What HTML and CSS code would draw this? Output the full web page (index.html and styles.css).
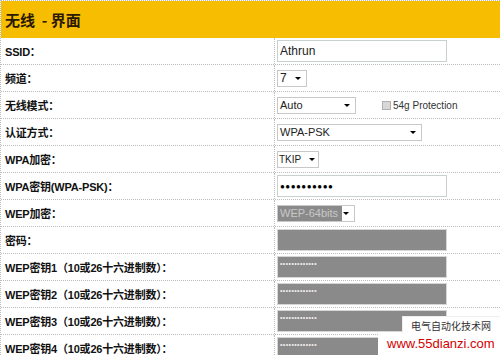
FILE: index.html
```html
<!DOCTYPE html>
<html>
<head>
<meta charset="utf-8">
<link rel="stylesheet" href="styles.css">
</head>
<body>
<div class="page">
  <div class="header">无线&nbsp; - 界面</div>
  <div class="row"><div class="label">SSID：</div><div class="field"><div class="input">Athrun</div></div></div>
  <div class="row"><div class="label">频道：</div><div class="field"><div class="select w-ch">7<span class="arrow"></span></div></div></div>
  <div class="row"><div class="label">无线模式：</div><div class="field"><div class="select w-mode">Auto<span class="arrow"></span></div><span class="check"></span><span class="chk-label">54g Protection</span></div></div>
  <div class="row"><div class="label">认证方式：</div><div class="field"><div class="select w-auth">WPA-PSK<span class="arrow"></span></div></div></div>
  <div class="row"><div class="label">WPA加密：</div><div class="field"><div class="select w-tkip">TKIP<span class="arrow"></span></div></div></div>
  <div class="row"><div class="label">WPA密钥(WPA-PSK)：</div><div class="field"><div class="input pwd">●●●●●●●●●●</div></div></div>
  <div class="row"><div class="label">WEP加密：</div><div class="field"><div class="select w-wep disabled"><span class="sel-text">WEP-64bits</span><span class="arrow"></span></div></div></div>
  <div class="row"><div class="label">密码：</div><div class="field"><div class="input gray"></div></div></div>
  <div class="row"><div class="label">WEP密钥1（10或26十六进制数）：</div><div class="field"><div class="input gray"><span class="dots">•••••••••••••</span></div></div></div>
  <div class="row"><div class="label">WEP密钥2（10或26十六进制数）：</div><div class="field"><div class="input gray"><span class="dots">•••••••••••••</span></div></div></div>
  <div class="row"><div class="label">WEP密钥3（10或26十六进制数）：</div><div class="field"><div class="input gray"><span class="dots">•••••••••••••</span></div></div></div>
  <div class="row"><div class="label">WEP密钥4（10或26十六进制数）：</div><div class="field"><div class="input gray"><span class="dots">•••••••••••••</span></div></div></div>
  <div class="wm-box">电气自动化技术网</div>
  <div class="wm-url">www.55dianzi.com</div>
</div>
</body>
</html>
```
FILE: styles.css
```css
html, body { margin: 0; padding: 0; background: #fff; }
body { width: 500px; height: 355px; overflow: hidden; }
.page {
  position: relative;
  width: 500px;
  height: 355px;
  border-top: 1px dotted #bbb;
  border-left: 1px dotted #bbb;
  box-sizing: border-box;
  font-family: "Liberation Sans", "Noto Sans CJK SC", sans-serif;
}
.header {
  height: 37px;
  background: #f7bd00;
  font-family: "Noto Sans CJK SC", sans-serif;
  font-weight: bold;
  font-size: 15px;
  color: #2b1a00;
  padding-left: 4px;
  box-sizing: border-box;
  padding-top: 2px;
  line-height: 33px;
}
.row {
  display: grid;
  grid-template-columns: 274px 1fr;
  height: 27px;
  box-sizing: border-box;
  border-bottom: 1px dotted #bbb;
}
.label {
  font-weight: bold;
  font-size: 11px;
  letter-spacing: -0.2px;
  color: #111;
  padding-left: 4px;
  display: flex;
  align-items: center;
  border-right: 1px dotted #bbb;
}
.field {
  display: flex;
  align-items: center;
  padding-left: 2px;
}
.input {
  width: 170px;
  height: 22px;
  box-sizing: border-box;
  border: 1px solid #c9d0d0;
  font-size: 12px;
  color: #222;
  padding-left: 2px;
  display: flex;
  align-items: center;
}
.input.pwd { font-size: 8px; letter-spacing: 0.5px; color: #000; padding-left: 2px; }
.input.gray { background: #8a8a8a; border-color: #d6d6d6; align-items: flex-start; }
.dots { color: #eee; font-size: 7px; line-height: 7px; margin-top: 3px; letter-spacing: 0.4px; }
.select {
  position: relative;
  height: 17px;
  box-sizing: border-box;
  border: 1px solid #c8c8c8;
  font-size: 11px;
  color: #222;
  padding-left: 2px;
  display: flex;
  align-items: center;
}
.arrow {
  position: absolute;
  right: 5px;
  top: 6px;
  width: 0; height: 0;
  border-left: 3px solid transparent;
  border-right: 3px solid transparent;
  border-top: 3px solid #000;
}
.w-ch { width: 30px; font-size: 12px; }
.w-mode { width: 79px; }
.w-auth { width: 145px; }
.w-tkip { width: 42px; font-size: 10px; padding-left: 1px; }
.w-tkip .arrow { right: 3px; }
.w-wep { width: 78px; padding-left: 0; }
.disabled .sel-text {
  background: #8a8a8a;
  color: #c8c8c8;
  height: 15px;
  width: 62px;
  display: flex;
  align-items: center;
  padding-left: 2px;
  font-size: 11px;
}
.check {
  width: 9px; height: 9px;
  box-sizing: border-box;
  border: 1px solid #b0b0b0;
  background: #d8d8d8;
  margin-left: 26px;
}
.chk-label { font-size: 10px; color: #333; margin-left: 2px; }
.wm-box {
  position: absolute;
  left: 401px;
  top: 315px;
  width: 110px;
  height: 20px;
  border-top: 1px solid #eee;
  border-left: 1px solid #eee;
  background: #fff;
  font-family: "Noto Sans CJK SC", sans-serif;
  font-size: 10px;
  color: #333;
  padding-left: 8px;
  line-height: 18px;
  box-sizing: border-box;
}
.wm-url {
  position: absolute;
  left: 377px;
  top: 332px;
  width: 123px;
  height: 23px;
  background: #fff;
  color: #d40000;
  font-size: 13px;
  padding-left: 9px;
  line-height: 22px;
  box-sizing: border-box;
}
```
